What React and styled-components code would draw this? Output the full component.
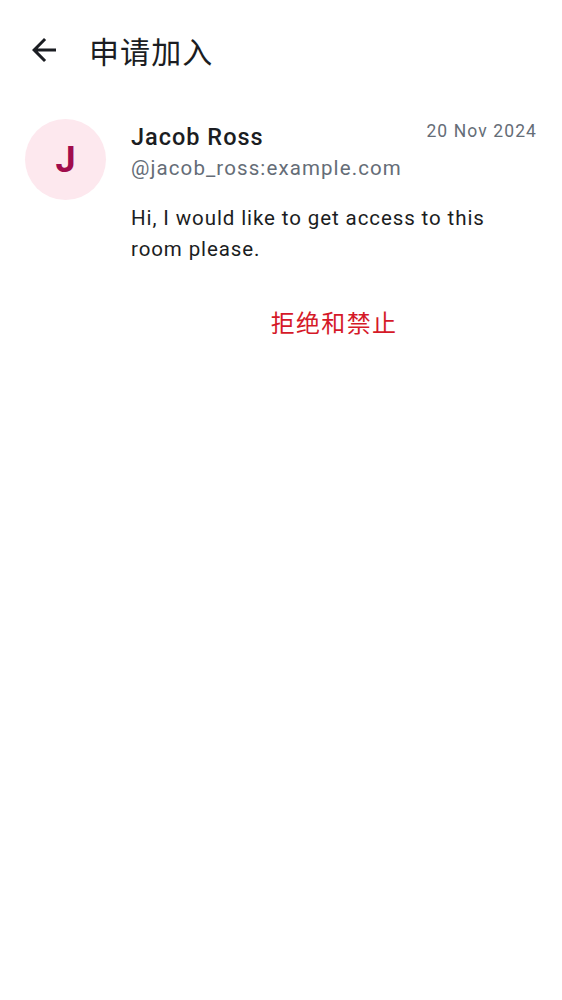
import React from 'react';
import styled, { createGlobalStyle } from 'styled-components';

const Global = createGlobalStyle`
  html, body {
    margin: 0;
    padding: 0;
    background: #ffffff;
  }
  body {
    font-family: Roboto, "Noto Sans CJK SC", sans-serif;
    color: #1b1d22;
  }
`;

const Page = styled.div`
  width: 562px;
  min-height: 1000px;
  background: #ffffff;
`;

const TopBar = styled.header`
  display: flex;
  align-items: center;
  height: 100px;
  padding-left: 26px;
  box-sizing: border-box;
`;

const BackButton = styled.button`
  display: flex;
  align-items: center;
  justify-content: center;
  width: 36px;
  height: 36px;
  margin-top: -1px;
  padding: 0;
  border: none;
  background: none;
  color: #1b1d22;
  cursor: pointer;
`;

const Title = styled.h1`
  margin: 0 0 0 27px;
  font-family: "Noto Sans CJK SC", sans-serif;
  font-size: 30px;
  font-weight: 400;
  color: #1b1d22;
  letter-spacing: 1.1px;
`;

const RequestRow = styled.div`
  display: flex;
  padding: 19px 25px 0 25px;
  gap: 25px;
`;

const Avatar = styled.div`
  flex: none;
  display: flex;
  align-items: center;
  justify-content: center;
  width: 81px;
  height: 81px;
  border-radius: 50%;
  background: #fde8ee;
  color: #a10c4c;
  font-size: 36px;
  font-weight: 700;
`;

const Body = styled.div`
  flex: 1;
  display: flex;
  flex-direction: column;
`;

const HeaderLine = styled.div`
  display: flex;
  justify-content: space-between;
  align-items: flex-start;
`;

const Name = styled.div`
  margin-top: 2px;
  font-size: 23.5px;
  font-weight: 500;
  line-height: 32px;
  letter-spacing: 1px;
  color: #1b1d22;
`;

const DateText = styled.div`
  font-size: 17.5px;
  line-height: 24px;
  color: #656d77;
  letter-spacing: 1.1px;
`;

const Handle = styled.div`
  font-size: 20.5px;
  line-height: 30px;
  letter-spacing: 1.1px;
  color: #656d77;
`;

const Message = styled.p`
  margin: 20px 0 0;
  font-size: 20.5px;
  line-height: 31px;
  color: #1b1d22;
  letter-spacing: 0.9px;
`;

const DeclineButton = styled.button`
  align-self: center;
  margin-top: 31px;
  padding: 8px 16px;
  border: none;
  background: none;
  font-family: "Noto Sans CJK SC", sans-serif;
  font-size: 24px;
  letter-spacing: 1.3px;
  color: #d51928;
  cursor: pointer;
`;

function ArrowBack() {
  return (
    <svg width="36" height="36" viewBox="0 0 24 24" fill="currentColor">
      <path d="M20 11H7.83l5.59-5.59L12 4l-8 8 8 8 1.41-1.41L7.83 13H20v-2z" />
    </svg>
  );
}

export default function App() {
  return (
    <Page>
      <Global />
      <TopBar>
        <BackButton aria-label="back">
          <ArrowBack />
        </BackButton>
        <Title>申请加入</Title>
      </TopBar>
      <RequestRow>
        <Avatar>J</Avatar>
        <Body>
          <HeaderLine>
            <Name>Jacob Ross</Name>
            <DateText>20 Nov 2024</DateText>
          </HeaderLine>
          <Handle>@jacob_ross:example.com</Handle>
          <Message>Hi, I would like to get access to this room please.</Message>
          <DeclineButton>拒绝和禁止</DeclineButton>
        </Body>
      </RequestRow>
    </Page>
  );
}
